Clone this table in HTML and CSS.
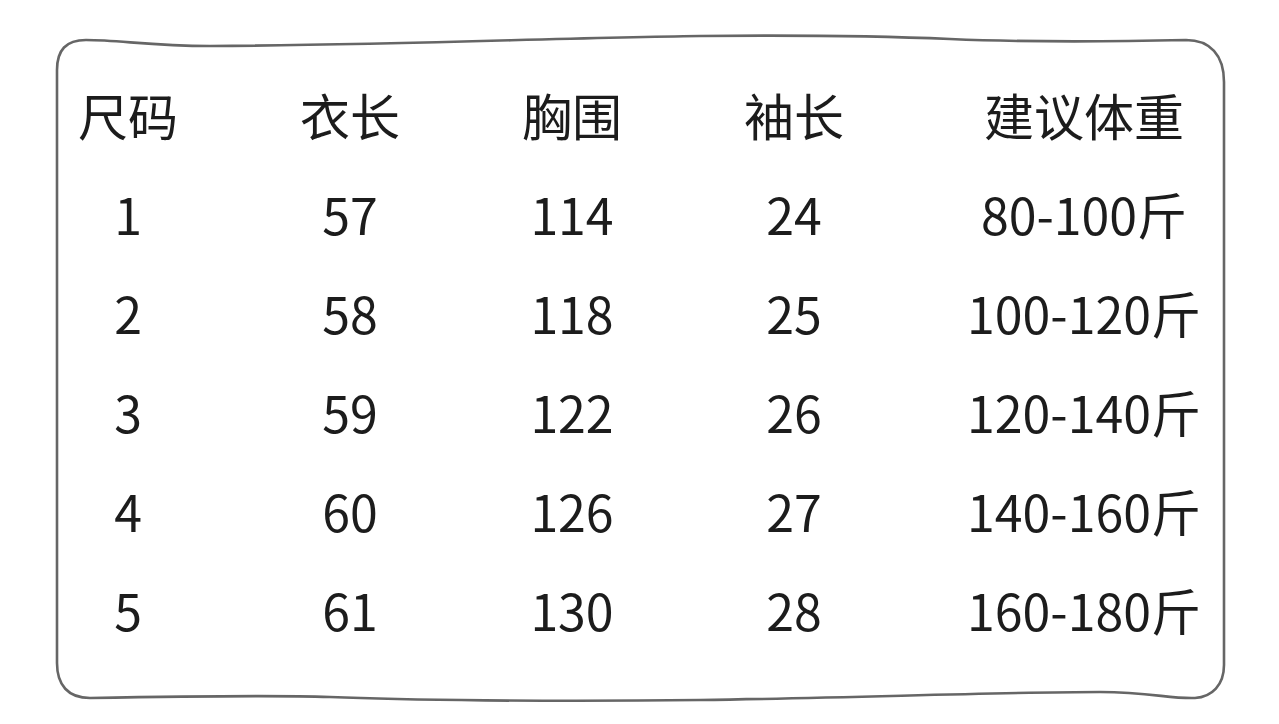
FILE: index.html
```html
<!DOCTYPE html>
<html lang="zh-CN">
<head>
<meta charset="utf-8">
<title>尺码表</title>
<link rel="stylesheet" href="styles.css">
</head>
<body>
<div class="page">
  <svg class="frame" viewBox="0 0 1279 724" width="1279" height="724" aria-hidden="true">
    <path d="M 57 70 C 57 50, 66 40, 86 40 C 120 40, 150 46, 210 46 C 400 45, 550 38, 700 36 C 800 35, 880 36, 950 39 C 1020 42, 1100 42, 1186 40 C 1210 40, 1224 55, 1224 82 L 1224 665 C 1224 685, 1212 697, 1195 698 C 1170 699, 1150 692, 1100 692 C 1000 692, 850 698, 700 700 C 550 702, 400 700, 330 697 C 270 695, 200 696, 90 698 C 68 698, 57 685, 57 663 Z" fill="none" stroke="#666" stroke-width="2.6"/>
  </svg>
  <div class="table">
    <div class="cell">尺码</div><div class="cell">衣长</div><div class="cell">胸围</div><div class="cell">袖长</div><div class="cell">建议体重</div>
    <div class="cell">1</div><div class="cell">57</div><div class="cell">114</div><div class="cell">24</div><div class="cell">80-100斤</div>
    <div class="cell">2</div><div class="cell">58</div><div class="cell">118</div><div class="cell">25</div><div class="cell">100-120斤</div>
    <div class="cell">3</div><div class="cell">59</div><div class="cell">122</div><div class="cell">26</div><div class="cell">120-140斤</div>
    <div class="cell">4</div><div class="cell">60</div><div class="cell">126</div><div class="cell">27</div><div class="cell">140-160斤</div>
    <div class="cell">5</div><div class="cell">61</div><div class="cell">130</div><div class="cell">28</div><div class="cell">160-180斤</div>
  </div>
</div>
</body>
</html>
```
FILE: styles.css
```css
html, body {
  margin: 0;
  padding: 0;
  background: #ffffff;
}
.page {
  position: relative;
  width: 1279px;
  height: 724px;
  overflow: hidden;
  background: #ffffff;
}
.frame {
  position: absolute;
  left: 0;
  top: 0;
}
.table {
  position: relative;
  display: grid;
  grid-template-columns: 222px 222px 222px 222px 358px;
  grid-auto-rows: 99px;
  padding-top: 64px;
  margin-left: 17px;
  font-family: "Noto Sans CJK SC", "Noto Sans", sans-serif;
  font-size: 50px;
  color: #1c1c1c;
}
.cell {
  display: flex;
  align-items: center;
  justify-content: center;
  line-height: 1;
  white-space: nowrap;
}
```
